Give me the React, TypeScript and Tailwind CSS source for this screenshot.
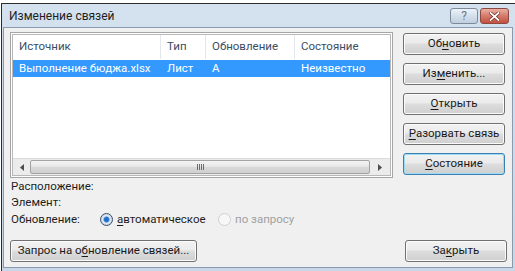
import React from 'react';

type BtnProps = {
  children: React.ReactNode;
  className?: string;
  focused?: boolean;
};

function Btn({ children, className = '', focused = false }: BtnProps) {
  return (
    <button
      className={`h-[22px] rounded-[3px] border text-[11.5px] text-[#1a1a1a] flex items-center justify-center bg-[linear-gradient(#f2f2f2,#ebebeb_45%,#dddddd_50%,#cfcfcf)] ${
        focused
          ? 'border-[#3c7fb1] shadow-[inset_0_0_0_1px_#9ddcf3]'
          : 'border-[#707070] shadow-[inset_0_0_0_1px_#fbfbfb]'
      } ${className}`}
    >
      {children}
    </button>
  );
}

const U = ({ children }: { children: React.ReactNode }) => (
  <span className="underline underline-offset-2">{children}</span>
);

export default function App() {
  const cols = [
    { w: 'w-[148px]', label: 'Источник' },
    { w: 'w-[45px]', label: 'Тип' },
    { w: 'w-[89px]', label: 'Обновление' },
    { w: 'flex-1', label: 'Состояние' },
  ];
  const row = ['Выполнение бюджа.xlsx', 'Лист', 'A', 'Неизвестно'];

  return (
    <div className="w-[515px] h-[271px] bg-white pt-[3px] pl-[1px] font-['Roboto',sans-serif] text-[11.5px] text-[#1e1e1e] overflow-hidden">
      <div className="h-full border-t border-l border-[#2b2b2b] flex flex-col bg-[linear-gradient(#d4e1ee,#c7d7e8)]">
        {/* title bar */}
        <div className="h-[23px] flex items-center justify-between pl-[7px] pr-[6px] shrink-0">
          <span className="text-[12px] text-[#1e1e1e] pt-[1px]">Изменение связей</span>
          <div className="flex items-center gap-[2px] mt-[1px]">
            <div className="w-[28px] h-[16px] rounded-[3px] border border-[#7d8a9a] bg-[linear-gradient(#eef3f8,#d3dfeb_50%,#c0cfdf)] flex items-center justify-center text-[12px] leading-none text-[#6b7888]">
              ?
            </div>
            <div className="w-[29px] h-[16px] rounded-[3px] border border-[#8a4a43] bg-[linear-gradient(#eab0a2,#d47a6a_50%,#c5503f)] flex items-center justify-center">
              <svg width="11" height="9" viewBox="0 0 11 9">
                <path d="M1.5 1 L9.5 8 M9.5 1 L1.5 8" stroke="#6b2a24" strokeWidth="3.2" strokeLinecap="square" />
                <path d="M1.5 1 L9.5 8 M9.5 1 L1.5 8" stroke="#fff" strokeWidth="1.8" strokeLinecap="square" />
              </svg>
            </div>
          </div>
        </div>

        {/* client area */}
        <div className="flex-1 ml-[1px] mr-[2px] mb-[3px] bg-[#f0f0f0] border border-[#8a9bb0] flex flex-col pl-[6px] pr-[5px] pt-[4px]">
          <div className="flex gap-[10px]">
            {/* list view */}
            <div className="w-[383px] h-[146px] shrink-0 border border-[#a6a6a6] p-[1px] bg-white">
              <div className="h-full border border-[#b8b8b8] flex flex-col">
                <div className="flex h-[24px] shrink-0 text-[#3b4d64]">
                  {cols.map((c, i) => (
                    <div
                      key={i}
                      className={`${c.w} flex items-center pl-[6px] ${i < 3 ? 'border-r border-[#e3e8ee]' : ''}`}
                    >
                      {c.label}
                    </div>
                  ))}
                </div>
                <div className="flex h-[17px] mt-[1px] bg-[#3399ff] text-white">
                  {cols.map((c, i) => (
                    <div key={i} className={`${c.w} flex items-center pl-[6px] whitespace-nowrap`}>
                      {row[i]}
                    </div>
                  ))}
                </div>
                <div className="flex-1" />
                {/* horizontal scrollbar */}
                <div className="h-[17px] flex bg-[#ececec] border-t border-[#dcdcdc] shrink-0">
                  <div className="w-[17px] flex items-center justify-center">
                    <svg width="4" height="7" viewBox="0 0 4 7">
                      <path d="M4 0 L0 3.5 L4 7 Z" fill="#4d4d4d" />
                    </svg>
                  </div>
                  <div className="flex-1 my-[1px] rounded-[2px] border border-[#a3a3a3] bg-[linear-gradient(#f4f4f4,#e8e8e8_45%,#d9d9d9_50%,#d0d0d0)] flex items-center justify-center">
                    <div className="flex gap-[1px]">
                      <div className="w-[1px] h-[6px] bg-[#6d6d6d]" />
                      <div className="w-[1px] h-[6px] bg-[#6d6d6d]" />
                      <div className="w-[1px] h-[6px] bg-[#6d6d6d]" />
                      <div className="w-[1px] h-[6px] bg-[#6d6d6d]" />
                    </div>
                  </div>
                  <div className="w-[20px] flex items-center justify-center">
                    <svg width="4" height="7" viewBox="0 0 4 7">
                      <path d="M0 0 L4 3.5 L0 7 Z" fill="#4d4d4d" />
                    </svg>
                  </div>
                </div>
              </div>
            </div>

            {/* right buttons */}
            <div className="flex flex-col gap-[8px] pt-[1px]">
              <Btn className="w-[102px]">
                Об<U>н</U>овить
              </Btn>
              <Btn className="w-[102px]">
                Из<U>м</U>енить...
              </Btn>
              <Btn className="w-[102px]">
                <U>О</U>ткрыть
              </Btn>
              <Btn className="w-[102px]">
                <U>Р</U>азорвать связь
              </Btn>
              <Btn className="w-[102px]" focused>
                <U>С</U>остояние
              </Btn>
            </div>
          </div>

          {/* details */}
          <div className="flex flex-col pl-[1px] mt-[1px]">
            <div className="h-[16px] flex items-center">Расположение:</div>
            <div className="h-[16px] flex items-center">Элемент:</div>
            <div className="h-[17px] flex items-center">
              <span className="w-[89px]">Обновление:</span>
              <span className="w-[13px] h-[13px] rounded-full border border-[#3d4e66] bg-[radial-gradient(circle,#1b63b5_0,#2b7bd1_30%,#d9e6f4_45%,#ffffff_80%)] shadow-[inset_0_0_0_1px_#c6d5e6]" />
              <span className="ml-[4px] w-[101px]">
                <U>а</U>втоматическое
              </span>
              <span className="w-[13px] h-[13px] rounded-full border border-[#d0d0d0] bg-[#f7f7f7]" />
              <span className="ml-[4px] text-[#a0a0a0]">по запросу</span>
            </div>
          </div>

          <div className="flex justify-between mt-[auto] mb-[5px]">
            <Btn className="w-[187px]">
              Запрос на о<U>б</U>новление связей...
            </Btn>
            <Btn className="w-[102px]">
              За<U>к</U>рыть
            </Btn>
          </div>
        </div>
      </div>
    </div>
  );
}
